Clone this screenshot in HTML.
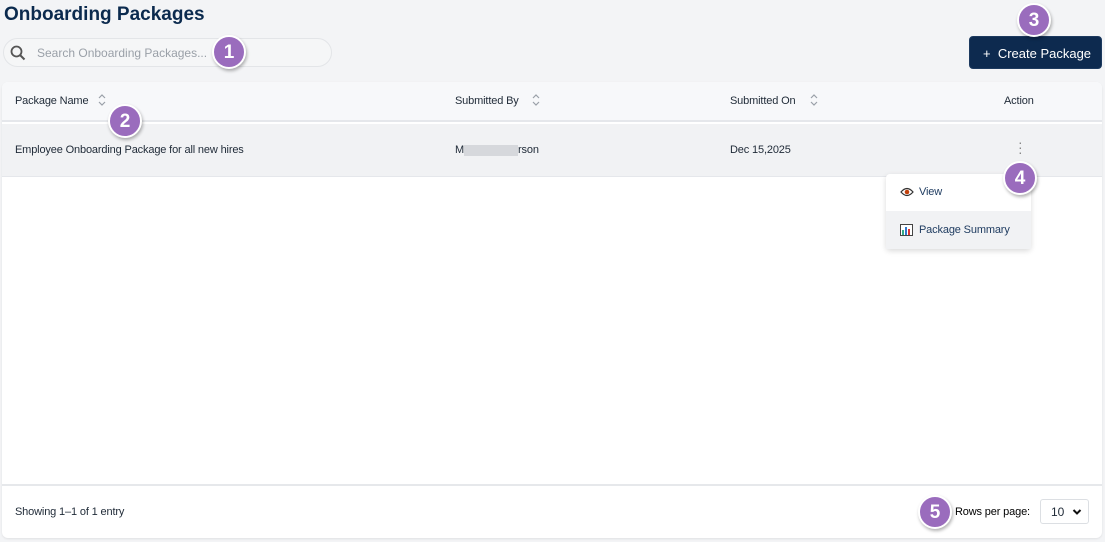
<!DOCTYPE html><html><head><style>
*{box-sizing:border-box;margin:0;padding:0}
body{width:1105px;height:542px;background:#f3f4f6;font-family:"Liberation Sans",sans-serif;position:relative;overflow:hidden;color:#1f2a37}
.abs{position:absolute}
h1{position:absolute;left:4px;top:4px;font-size:19px;font-weight:bold;color:#0b2a4e}
.search{left:3px;top:38px;width:329px;height:29px;border:1px solid #e3e5e8;border-radius:15px;background:#f5f6f7}
.search span{position:absolute;left:33px;top:7px;font-size:12px;color:#9aa0a8}
.btn{left:969px;top:36px;width:133px;height:33px;background:#0d2a4f;border-radius:4px;color:#fff;font-size:13px;line-height:33px;padding-left:13px;border:1px solid #1d3a5f}
.card{left:2px;top:82px;width:1100px;height:456px;background:#fff;border-radius:6px;box-shadow:0 1px 2px rgba(0,0,0,.08);overflow:hidden}
.th{top:0;left:0;width:100%;height:40px;background:#f7f8fa;border-bottom:2px solid #e5e7eb}
.row{top:42px;left:0;width:100%;height:53px;background:#f1f2f4;border-bottom:1px solid #e5e7eb}
.t{position:absolute;font-size:11px;color:#1f2a37;letter-spacing:-0.15px}
.sort{position:absolute;width:8px;height:14px}
.foot{left:0;top:402px;width:100%;height:54px;border-top:2px solid #e6e8eb}
.badge{width:34px;height:34px;border-radius:50%;background:#9a6cbd;color:#fff;font-weight:bold;font-size:19px;text-align:center;line-height:32px;border:2px solid #fff;box-shadow:1px 2px 3px rgba(0,0,0,.3)}
.menu{left:886px;top:174px;width:145px;height:75px;background:#fff;border-radius:4px;box-shadow:0 2px 6px rgba(0,0,0,.15)}
.sel{left:1040px;top:499px;width:49px;height:25px;border:1px solid #dcdfe3;border-radius:3px;background:#fff;font-size:12px;padding:5px 0 0 10px}
</style></head><body>
<h1>Onboarding Packages</h1>
<div class="abs search"><svg class="abs" style="left:6px;top:6px" width="16" height="16" viewBox="0 0 16 16"><circle cx="6.5" cy="6.5" r="5" fill="none" stroke="#555" stroke-width="1.8"/><path d="M10 10l4.5 4.5" stroke="#555" stroke-width="2"/></svg><span>Search Onboarding Packages...</span></div>
<div class="abs btn">+&nbsp;&nbsp;Create Package</div>
<div class="abs card">
<div class="abs th">
<span class="t" style="left:13px;top:13px">Package Name</span>
<svg class="sort" style="left:96px;top:11px" viewBox="0 0 8 14"><path d="M1 5l3-3 3 3M1 9l3 3 3-3" fill="none" stroke="#9aa0a8" stroke-width="1.2"/></svg>
<span class="t" style="left:453px;top:13px">Submitted By</span>
<svg class="sort" style="left:530px;top:11px" viewBox="0 0 8 14"><path d="M1 5l3-3 3 3M1 9l3 3 3-3" fill="none" stroke="#9aa0a8" stroke-width="1.2"/></svg>
<span class="t" style="left:728px;top:13px">Submitted On</span>
<svg class="sort" style="left:808px;top:11px" viewBox="0 0 8 14"><path d="M1 5l3-3 3 3M1 9l3 3 3-3" fill="none" stroke="#9aa0a8" stroke-width="1.2"/></svg>
<span class="t" style="left:1002px;top:13px">Action</span>
</div>
<div class="abs row">
<span class="t" style="left:13px;top:20px">Employee Onboarding Package for all new hires</span>
<span class="t" style="left:453px;top:20px">M<span style="display:inline-block;width:54px;height:11px;background:#d6d8dc;vertical-align:middle"></span>rson</span>
<span class="t" style="left:728px;top:20px">Dec 15,2025</span>
<span class="t" style="left:1016px;top:16px;color:#888;font-size:14px;line-height:5px">·<br>·<br>·</span>
</div>
<div class="abs foot"><span class="t" style="left:13px;top:20px">Showing 1–1 of 1 entry</span>
<span class="t" style="left:953px;top:20px;color:#000">Rows per page:</span></div>
</div>
<div class="abs menu">
<div class="abs" style="left:0;top:0;width:145px;height:37px"><svg class="abs" style="left:14px;top:13px" width="14" height="10" viewBox="0 0 14 10"><path d="M1 5Q7-2 13 5Q7 12 1 5Z" fill="#fff" stroke="#333" stroke-width="1.2"/><circle cx="7" cy="5" r="2.3" fill="#c2410c"/></svg><span class="t" style="left:33px;top:12px;color:#1d3a5f">View</span></div>
<div class="abs" style="left:0;top:37px;width:145px;height:38px;background:#f1f2f4"><svg class="abs" style="left:14px;top:13px" width="13" height="12" viewBox="0 0 13 12"><rect x=".5" y=".5" width="12" height="11" fill="#fff" stroke="#444"/><rect x="2" y="6" width="2" height="5" fill="#3a8"/><rect x="5" y="3" width="2" height="8" fill="#37c"/><rect x="8" y="5" width="2" height="6" fill="#d33"/></svg><span class="t" style="left:33px;top:13px;color:#1d3a5f">Package Summary</span></div>
</div>
<div class="abs sel">10 <svg class="abs" style="right:6px;top:8px" width="10" height="8" viewBox="0 0 10 8"><path d="M1.5 2l3.5 3.5L8.5 2" fill="none" stroke="#111" stroke-width="2"/></svg></div>
<div class="abs badge" style="left:212px;top:35px">1</div>
<div class="abs badge" style="left:108px;top:104px">2</div>
<div class="abs badge" style="left:1017px;top:3px">3</div>
<div class="abs badge" style="left:1003px;top:161px">4</div>
<div class="abs badge" style="left:918px;top:495px">5</div>
</body></html>
